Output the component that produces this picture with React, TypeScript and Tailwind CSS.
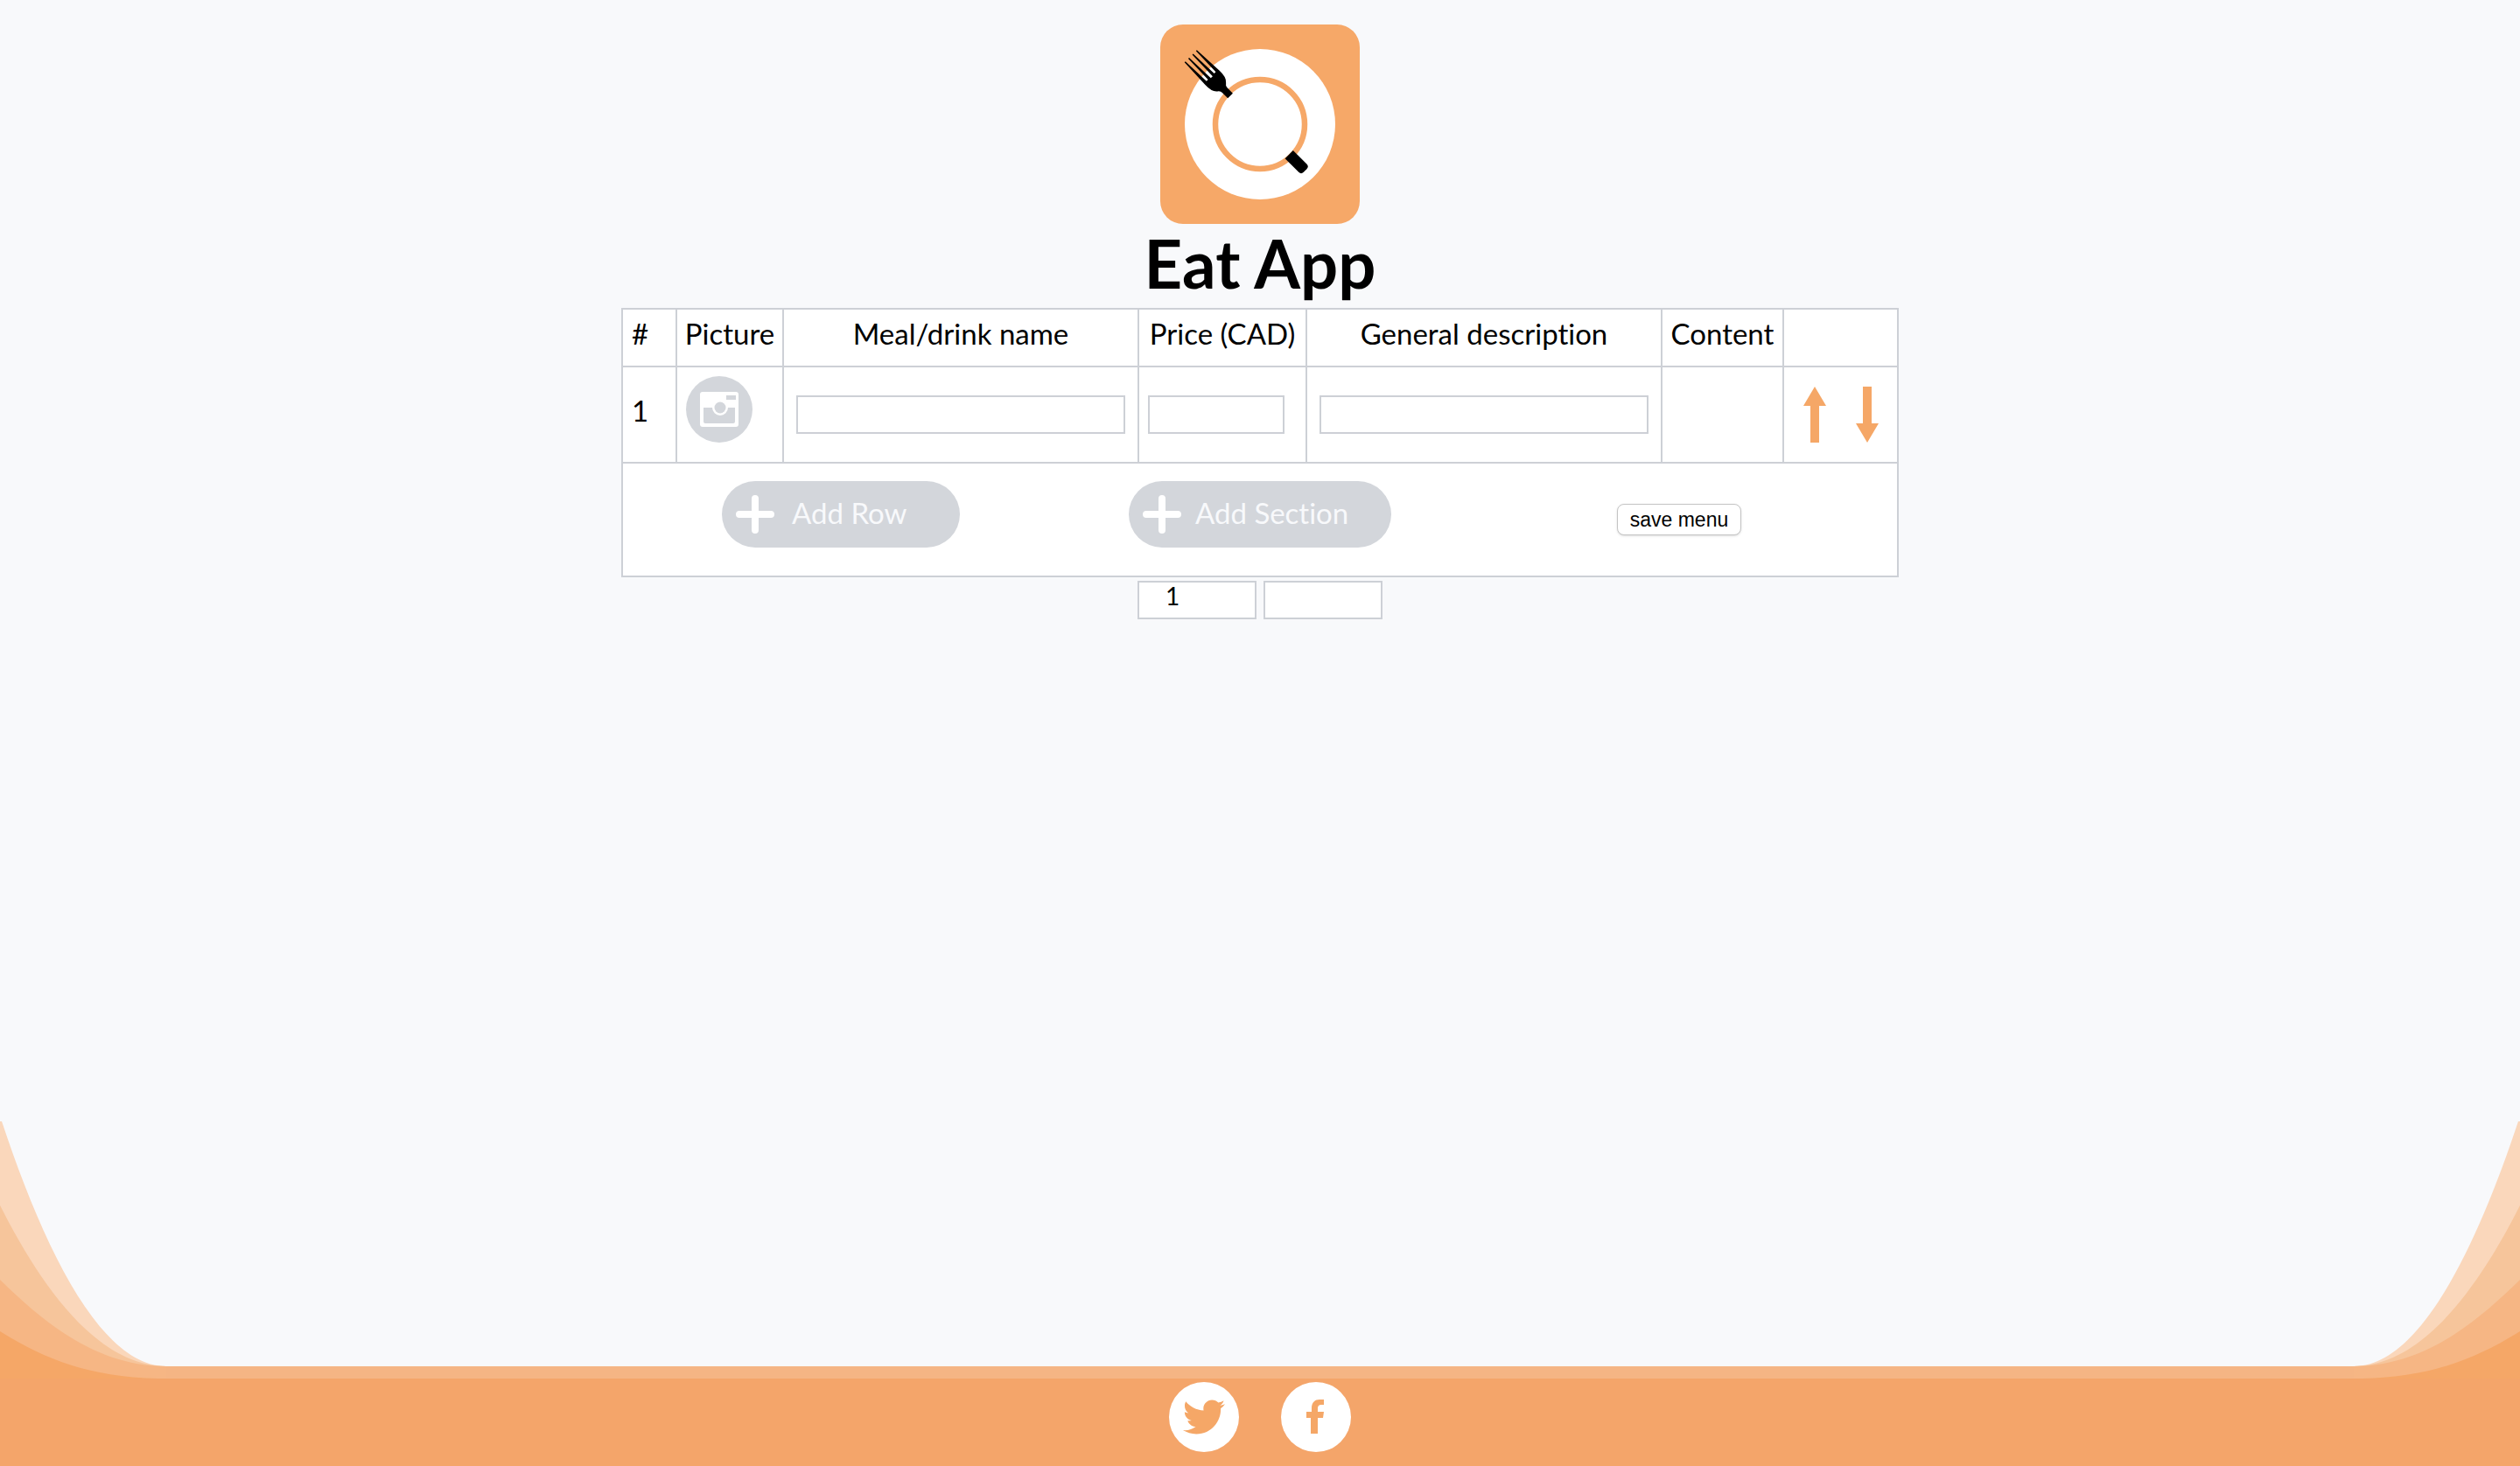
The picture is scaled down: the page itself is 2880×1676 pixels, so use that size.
import React from "react";

const cell = "border-2 border-[#cdd0d6] p-0";
const field = "block h-11 border-2 border-[#cdd0d6] bg-white text-[28px] outline-none";

function Logo() {
  return (
    <svg viewBox="0 0 228 228" className="size-57" role="img" aria-label="Eat App logo">
      <rect width="228" height="228" rx="26" fill="#f6a868" />
      <circle cx="114" cy="114" r="86" fill="#fff" />
      <circle cx="114" cy="114" r="51" fill="none" stroke="#f6a868" strokeWidth="6.5" />
      <g transform="translate(114 114) rotate(-45) translate(-1 0)">
        <path d="M-4 -47V-56Q-4 -59 -7 -61Q-12 -65 -11.500 -76L-10 -111H-8.500L-7.500 -78H-5L-4 -111H-2.500L-1.500 -77H1.500L2.500 -111H4L5 -78H7.500L8.500 -111H10L11.500 -76Q12 -65 7 -61Q4 -59 4 -56V-47Z" />
        <path d="M-6.500 48H6.500V70Q6.500 74 2.500 74H-2.500Q-6.500 74 -6.500 70Z" />
      </g>
    </svg>
  );
}

function Wave({ className }: { className: string }) {
  return (
    <svg viewBox="0 0 190 294" className={className} aria-hidden="true">
      <path d="M0 0H2C50 145 115 280 190 280V294H0Z" fill="#fad7bb" />
      <path d="M0 96C45 185 110 280 190 280V294H0Z" fill="#f6c59b" />
      <path d="M0 181C50 230 110 280 190 280V294H0Z" fill="#f6b684" />
      <path d="M0 240C50 271 100 292 180 294H0Z" fill="#f5a767" />
    </svg>
  );
}

function AddButton({ label, className }: { label: string; className: string }) {
  return (
    <button type="button" className={`flex h-19 items-center rounded-full bg-[#d3d6db] pl-4 text-[33px] leading-10 text-[#f8f9fb] ${className}`}>
      <svg viewBox="0 0 44 44" className="size-11" aria-hidden="true">
        <path d="M22 4V40M4 22H40" stroke="#fff" strokeWidth="8" strokeLinecap="round" />
      </svg>
      <span className="pb-1">{label}</span>
    </button>
  );
}

export default function App() {
  return (
    <div className="flex min-h-screen flex-col bg-[#f8f9fb] font-['Lato',sans-serif] text-black [font-variant-ligatures:none]">
      <main className="flex flex-1 flex-col items-center pt-7">
        <Logo />
        <h1 className="h-24 text-[76px] leading-[90px] font-bold">Eat App</h1>
        <table className="table-fixed border-collapse bg-white text-[33px] leading-10">
          <colgroup>
            <col className="w-[62px]" />
            <col className="w-[122px]" />
            <col className="w-[406px]" />
            <col className="w-[192px]" />
            <col className="w-[406px]" />
            <col className="w-[139px]" />
            <col className="w-[131px]" />
          </colgroup>
          <thead>
            <tr className="h-[66px]">
              {["#", "Picture", "Meal/drink name", "Price (CAD)", "General description", "Content", ""].map((h, i) => (
                <th key={i} scope="col" className={`${cell} pb-2.5 font-normal whitespace-nowrap ${i === 0 ? "pl-2.5 text-left" : ""}`}>
                  {h}
                </th>
              ))}
            </tr>
          </thead>
          <tbody>
            <tr className="h-[110px]">
              <td className={`${cell} pb-2.5 pl-2.5`}>1</td>
              <td className={`${cell} pb-3 pl-2.5`}>
                <button type="button" aria-label="Add picture" className="block">
                  <svg viewBox="0 0 76 76" className="size-19" aria-hidden="true">
                    <circle cx="38" cy="38" r="38" fill="#d3d6db" />
                    <rect x="16" y="18" width="44" height="40" rx="3" fill="#fff" />
                    <path d="M20 36H30A9 9 0 0 0 48 36H56V52Q56 54 54 54H22Q20 54 20 52Z" fill="#d3d6db" />
                    <circle cx="39" cy="36" r="6.5" fill="#d3d6db" />
                    <rect x="46" y="22" width="11" height="5" fill="#d3d6db" />
                  </svg>
                </button>
              </td>
              <td className={cell}>
                <input aria-label="Meal/drink name" className={`${field} mx-auto w-94`} />
              </td>
              <td className={`${cell} pl-2.5`}>
                <input aria-label="Price (CAD)" className={`${field} w-39`} />
              </td>
              <td className={cell}>
                <input aria-label="General description" className={`${field} mx-auto w-94`} />
              </td>
              <td className={cell}></td>
              <td className={cell}>
                <div className="flex justify-center gap-8">
                  <button type="button" aria-label="Move up">
                    <svg viewBox="0 0 28 64" className="h-16 w-7" aria-hidden="true">
                      <path d="M14 0L27 22H19V64H9V22H1Z" fill="#f5a767" />
                    </svg>
                  </button>
                  <button type="button" aria-label="Move down">
                    <svg viewBox="0 0 28 64" className="h-16 w-7" aria-hidden="true">
                      <path d="M14 64L27 42H19V0H9V42H1Z" fill="#f5a767" />
                    </svg>
                  </button>
                </div>
              </td>
            </tr>
            <tr className="h-[130px]">
              <td colSpan={7} className={cell}>
                <div className="grid grid-cols-[498fr_460fr_498fr] items-center justify-items-center pb-3">
                  <AddButton label="Add Row" className="w-68 gap-5" />
                  <AddButton label="Add Section" className="w-75 gap-4" />
                  <button type="button" className="mt-3 h-9 rounded-lg border border-[#c4c4c4] bg-white px-3.5 font-['Liberation_Sans',sans-serif] text-[23px] leading-8 whitespace-nowrap shadow-sm">
                    save menu
                  </button>
                </div>
              </td>
            </tr>
          </tbody>
        </table>
        <div className="mt-1 flex gap-2">
          <input aria-label="Row number" defaultValue="1" className={`${field} w-34 pb-2.5 pl-7.5`} />
          <input aria-label="Section name" className={`${field} w-34`} />
        </div>
      </main>
      <footer className="relative h-25 bg-[#f4a56a]">
        <div className="absolute inset-x-0 bottom-full h-3.5 bg-[#f5b584]" />
        <Wave className="absolute bottom-full left-0 w-[190px]" />
        <Wave className="absolute right-0 bottom-full w-[190px] -scale-x-100" />
        <nav aria-label="Social links" className="flex justify-center gap-12 pt-1">
          <a href="#twitter" aria-label="Twitter" className="grid size-20 place-items-center rounded-full bg-white">
            <svg viewBox="0 0 24 24" className="size-12" aria-hidden="true">
              <path
                d="M23.954 4.569c-.885.389-1.83.654-2.825.775 1.014-.611 1.794-1.574 2.163-2.723-.951.555-2.005.959-3.127 1.184-.896-.959-2.173-1.559-3.591-1.559-2.717 0-4.92 2.203-4.92 4.917 0 .39.045.765.127 1.124C7.691 8.094 4.066 6.13 1.64 3.161c-.427.722-.666 1.561-.666 2.475 0 1.71.87 3.213 2.188 4.096-.807-.026-1.566-.248-2.228-.616v.061c0 2.385 1.693 4.374 3.946 4.827-.413.111-.849.171-1.296.171-.314 0-.615-.03-.916-.086.631 1.953 2.445 3.377 4.604 3.417-1.68 1.319-3.809 2.105-6.102 2.105-.39 0-.779-.023-1.17-.067 2.189 1.394 4.768 2.209 7.557 2.209 9.054 0 13.999-7.496 13.999-13.986 0-.209 0-.42-.015-.63.961-.689 1.8-1.56 2.46-2.548z"
                fill="#f5a767"
              />
            </svg>
          </a>
          <a href="#facebook" aria-label="Facebook" className="grid size-20 place-items-center rounded-full bg-white">
            <svg viewBox="0 0 80 80" className="size-20" aria-hidden="true">
              <path d="M34 59V41H29V34H35V30C35 23 39 20 44 20H49V26H46Q42 26 42 30V34H49L48 41H42V59Z" fill="#f5a767" />
            </svg>
          </a>
        </nav>
      </footer>
    </div>
  );
}
